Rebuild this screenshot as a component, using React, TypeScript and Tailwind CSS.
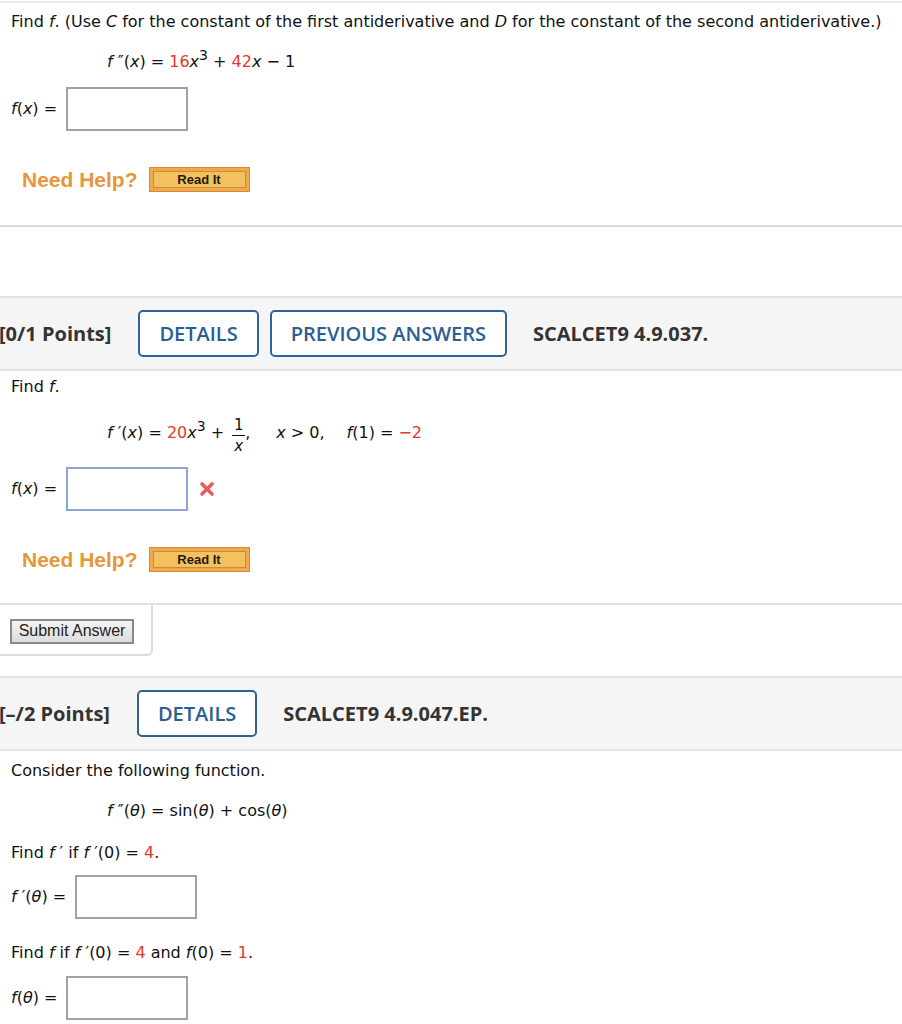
import React from 'react';

const RED = 'text-[#e8352b]';

const I: React.FC<{ children: React.ReactNode }> = ({ children }) => <i className="italic">{children}</i>;
const R: React.FC<{ children: React.ReactNode }> = ({ children }) => <span className={RED}>{children}</span>;

const AnswerBox: React.FC<{ active?: boolean; className?: string }> = ({ active, className = '' }) => (
  <div
    className={`w-[122px] h-[44px] bg-white border-2 ${active ? 'border-[#8aa8cf]' : 'border-[#a2a2a2]'} ${className}`}
  />
);

const NeedHelp: React.FC<{ className?: string }> = ({ className = '' }) => (
  <div className={`flex items-center pl-[22px] gap-[11px] ${className}`}>
    <span className="font-['Liberation_Sans',Arial,sans-serif] font-bold text-[21px] leading-[25px] text-[#e8963a]">
      Need Help?
    </span>
    <button className="w-[101px] h-[25px] bg-[#eea94f] border border-[#d98b33] p-[3px] flex">
      <span className="flex-1 flex items-center justify-center bg-[#f3c25e] border border-[#cf8b3c] font-['Liberation_Sans',Arial,sans-serif] font-bold text-[13px] text-[#1f1a10]">
        Read It
      </span>
    </button>
  </div>
);

const HeaderBand: React.FC<{ points: string; buttons: string[]; code: string; className?: string }> = ({
  points,
  buttons,
  code,
  className = '',
}) => (
  <div
    className={`h-[75px] bg-[#f5f5f5] border-y-2 border-[#e3e3e3] flex items-center font-['Open_Sans',sans-serif] ${className}`}
  >
    <span className="ml-[-1px] font-bold text-[20px] text-[#333] mr-[27px]">{points}</span>
    <div className="flex gap-[11px]">
      {buttons.map((b) => (
        <button
          key={b}
          className="h-[47px] px-[19px] border-2 border-[#2f6296] rounded-[5px] bg-white text-[#2b5e93] font-semibold text-[20px]"
        >
          {b}
        </button>
      ))}
    </div>
    <span className="ml-[26px] font-bold text-[20px] text-[#333]">{code}</span>
  </div>
);

const XMark = () => (
  <svg width="16" height="16" viewBox="0 0 16 16" className="ml-[2px]">
    <path d="M3 3 L13 13 M13 3 L3 13" stroke="#e35d5d" strokeWidth="3.6" strokeLinecap="round" />
  </svg>
);

export default function App() {
  return (
    <div className="w-[902px] min-h-[1024px] bg-white text-[#111] font-['DejaVu_Sans',Verdana,sans-serif] text-[16px] leading-[20px] overflow-hidden">
      <div className="h-[2px] mt-[1px] bg-[#e8e8e8]" />

      {/* question 1 tail */}
      <p className="pl-[11px] mt-[9px] whitespace-nowrap">
        Find <I>f</I>. (Use <I>C</I> for the constant of the first antiderivative and <I>D</I> for the constant of the
        second antiderivative.)
      </p>
      <p className="pl-[107px] mt-[20px]">
        <I>f</I> ″(<I>x</I>) = <R>16</R>
        <I>x</I>
        <sup className="text-[14px]">3</sup> + <R>42</R>
        <I>x</I> − 1
      </p>
      <div className="flex items-center pl-[11px] mt-[15px] gap-[9px]">
        <span>
          <I>f</I>(<I>x</I>) =
        </span>
        <AnswerBox />
      </div>
      <NeedHelp className="mt-[36px]" />
      <div className="h-[2px] mt-[33px] bg-[#dcdcdc]" />

      {/* question 2 */}
      <HeaderBand points="[0/1 Points]" buttons={['DETAILS', 'PREVIOUS ANSWERS']} code="SCALCET9 4.9.037." className="mt-[69px]" />
      <p className="pl-[11px] mt-[6px]">
        Find <I>f</I>.
      </p>
      <div className="flex items-center pl-[107px] mt-[14px]">
        <span>
          <I>f</I> ′(<I>x</I>) = <R>20</R>
          <I>x</I>
          <sup className="text-[14px]">3</sup> +
        </span>
        <span className="inline-flex flex-col items-center text-[15px] leading-[16px] mt-[6px] ml-[8px]">
          <span>1</span>
          <span className="block w-[13px] h-px bg-[#111] my-[2px]" />
          <I>x</I>
        </span>
        <span>,</span>
        <span className="ml-[26px]">
          <I>x</I> &gt; 0,
        </span>
        <span className="ml-[22px]">
          <I>f</I>(1) = <R>−2</R>
        </span>
      </div>
      <div className="flex items-center pl-[11px] mt-[13px] gap-[9px]">
        <span>
          <I>f</I>(<I>x</I>) =
        </span>
        <AnswerBox active />
        <XMark />
      </div>
      <NeedHelp className="mt-[36px]" />

      <div className="mt-[31px] border-t-2 border-[#e3e3e3]">
        <div className="w-[153px] h-[51px] border-r-2 border-b-2 border-[#dcdcdc] rounded-br-[6px] flex items-center pl-[10px] pt-[3px]">
          <button className="w-[124px] h-[25px] border-2 border-[#8a8a8a] bg-gradient-to-b from-[#f4f4f4] to-[#dcdcdc] font-['Liberation_Sans',Arial,sans-serif] text-[16px] leading-[20px] text-[#222]">
            Submit Answer
          </button>
        </div>
      </div>

      {/* question 3 */}
      <HeaderBand points="[–/2 Points]" buttons={['DETAILS']} code="SCALCET9 4.9.047.EP." className="mt-[20px]" />
      <p className="pl-[11px] mt-[10px]">Consider the following function.</p>
      <p className="pl-[107px] mt-[20px]">
        <I>f</I> ″(<I>θ</I>) = sin(<I>θ</I>) + cos(<I>θ</I>)
      </p>
      <p className="pl-[11px] mt-[22px]">
        Find <I>f</I> ′ if <I>f</I> ′(0) = <R>4</R>.
      </p>
      <div className="flex items-center pl-[11px] mt-[12px] gap-[9px]">
        <span>
          <I>f</I> ′(<I>θ</I>) =
        </span>
        <AnswerBox />
      </div>
      <p className="pl-[11px] mt-[24px]">
        Find <I>f</I> if <I>f</I> ′(0) = <R>4</R> and <I>f</I>(0) = <R>1</R>.
      </p>
      <div className="flex items-center pl-[11px] mt-[13px] gap-[9px]">
        <span>
          <I>f</I>(<I>θ</I>) =
        </span>
        <AnswerBox />
      </div>
    </div>
  );
}
